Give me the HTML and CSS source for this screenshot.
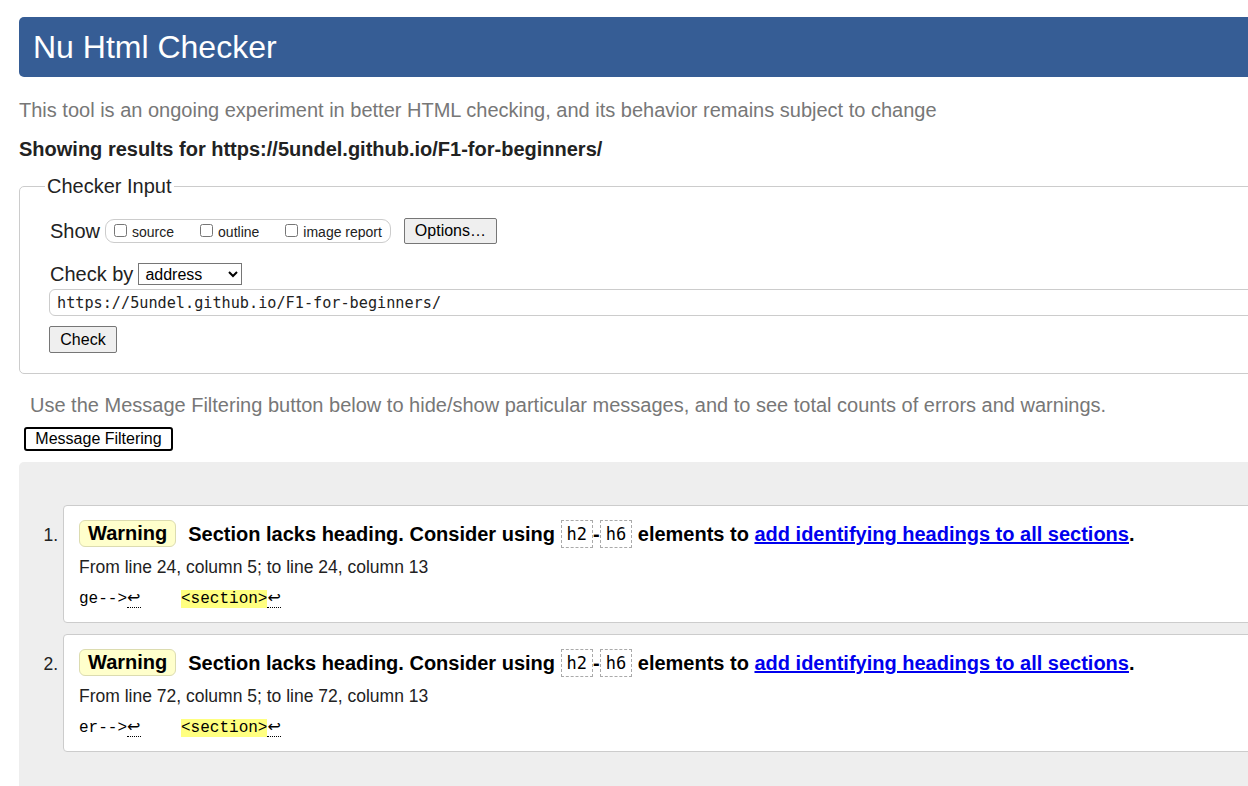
FILE: index.html
```html
<!DOCTYPE html>
<html lang="en">
<head>
<meta charset="utf-8">
<title>Nu Html Checker</title>
<link rel="stylesheet" href="styles.css">
</head>
<body>
<div class="page">
  <h1 class="title">Nu Html Checker</h1>
  <p class="intro">This tool is an ongoing experiment in better HTML checking, and its behavior remains subject to change</p>
  <p class="showing">Showing results for https://5undel.github.io/F1-for-beginners/</p>

  <fieldset class="input-box">
    <legend class="legend">Checker Input</legend>
    <div class="row show-row">
      <span class="row-label">Show</span>
      <span class="pill">
        <label class="opt"><input type="checkbox" class="cb">source</label>
        <label class="opt"><input type="checkbox" class="cb">outline</label>
        <label class="opt"><input type="checkbox" class="cb">image report</label>
      </span>
      <button class="btn options-btn" type="button">Options…</button>
    </div>
    <div class="row checkby-row">
      <span class="row-label">Check by</span>
      <select class="select"><option>address</option></select>
    </div>
    <div class="url-field">https://5undel.github.io/F1-for-beginners/</div>
    <button class="btn check-btn" type="button">Check</button>
  </fieldset>

  <p class="filter-note">Use the Message Filtering button below to hide/show particular messages, and to see total counts of errors and warnings.</p>
  <button class="filter-btn" type="button">Message Filtering</button>

  <div class="results">
    <ol class="msgs">
      <li class="msg">
        <p class="msg-line"><span class="badge">Warning</span><span class="msg-text">Section lacks heading. Consider using <code class="tag">h2</code>-<code class="tag">h6</code> elements to <a href="#" class="link">add identifying headings to all sections</a>.</span></p>
        <p class="loc">From line 24, column 5; to line 24, column 13</p>
        <p class="extract">ge--&gt;<span class="lf">↩</span><span class="gap"></span><mark class="hl">&lt;section&gt;</mark><span class="lf">↩</span></p>
      </li>
      <li class="msg">
        <p class="msg-line"><span class="badge">Warning</span><span class="msg-text">Section lacks heading. Consider using <code class="tag">h2</code>-<code class="tag">h6</code> elements to <a href="#" class="link">add identifying headings to all sections</a>.</span></p>
        <p class="loc">From line 72, column 5; to line 72, column 13</p>
        <p class="extract">er--&gt;<span class="lf">↩</span><span class="gap"></span><mark class="hl">&lt;section&gt;</mark><span class="lf">↩</span></p>
      </li>
    </ol>
  </div>
</div>
</body>
</html>
```

FILE: styles.css
```css
html, body {
  margin: 0;
  padding: 0;
  overflow: hidden;
  background: #fff;
}

body {
  font-family: "Liberation Sans", Arial, sans-serif;
  color: #222;
}

.page {
  width: 1400px;
  padding: 17px 0 0 19px;
}

.title {
  margin: 0;
  height: 60px;
  line-height: 60px;
  padding-left: 14px;
  font-size: 32px;
  font-weight: normal;
  color: #fff;
  background: #365d95;
  border-radius: 5px 0 0 5px;
}

.intro {
  margin: 22px 0 0;
  font-size: 20px;
  line-height: 23px;
  color: #777;
}

.showing {
  margin: 16px 0 0;
  font-size: 20px;
  line-height: 23px;
  font-weight: bold;
  color: #222;
}

.input-box {
  margin: 14px 0 0;
  padding: 0 0 20px 30px;
  border: 1px solid #ccc;
  border-radius: 5px 0 0 5px;
  min-width: 0;
}

.legend {
  font-size: 20px;
  line-height: 23px;
  padding: 0 2px;
  margin-left: -5px;
  color: #222;
}

.row {
  display: flex;
  align-items: center;
}

.row-label {
  font-size: 20px;
  color: #222;
}

.show-row {
  margin-top: 20px;
  height: 26px;
}

.pill {
  display: flex;
  align-items: center;
  height: 22px;
  margin-left: 5px;
  padding: 0 8px 0 8px;
  border: 1px solid #ccc;
  border-radius: 9px;
  gap: 26px;
}

.opt {
  display: flex;
  align-items: center;
  font-size: 14px;
  color: #222;
  padding-top: 2px;
}

.cb {
  width: 13px;
  height: 13px;
  margin: -4px 5px 0 0;
}

.btn {
  font-family: "Liberation Sans", Arial, sans-serif;
  font-size: 16px;
  color: #000;
  background: #efefef;
  border: 1px solid #767676;
  border-radius: 2px;
  padding: 0;
}

.options-btn {
  margin-left: 13px;
  width: 93px;
  height: 26px;
}

.checkby-row {
  margin-top: 18px;
  height: 24px;
}

.select {
  margin-left: 5px;
  width: 104px;
  height: 22px;
  font-family: "Liberation Sans", Arial, sans-serif;
  font-size: 16px;
  color: #000;
  border: 1px solid #767676;
  border-radius: 0;
  background: #fff;
  padding: 0 2px;
}

.url-field {
  margin: 3px 0 0 -1px;
  box-sizing: border-box;
  height: 27px;
  line-height: 23px;
  padding: 2px 0 0 7px;
  border: 1px solid #ccc;
  border-radius: 6px 0 0 6px;
  font-family: "DejaVu Sans Mono", "Liberation Mono", monospace;
  font-size: 15.2px;
  color: #222;
}

.check-btn {
  display: block;
  margin: 10px 0 0 -1px;
  width: 68px;
  height: 27px;
}

.filter-note {
  margin: 20px 0 0 11px;
  font-size: 20px;
  line-height: 23px;
  color: #777;
}

.filter-btn {
  display: block;
  margin: 10px 0 0 5px;
  width: 149px;
  height: 24px;
  padding: 0;
  font-family: "Liberation Sans", Arial, sans-serif;
  font-size: 16px;
  color: #000;
  background: #fff;
  border: 2px solid #000;
  border-radius: 3px;
}

.results {
  margin-top: 11px;
  background: #eee;
  border-radius: 5px 0 0 0;
  padding: 43px 0 60px;
}

.msgs {
  margin: 0;
  padding: 0 0 0 44px;
  font-size: 17.5px;
  color: #222;
}

.msg {
  background: #fff;
  border: 1px solid #ccc;
  border-radius: 4px 0 0 4px;
  padding: 14px 15px 12px;
  margin-bottom: 11px;
}

.msg-line {
  margin: 0;
  line-height: 28px;
  font-size: 20px;
  font-weight: bold;
  color: #000;
}

.badge {
  display: inline-block;
  box-sizing: border-box;
  height: 27px;
  line-height: 25px;
  padding: 0 8px;
  background: #ffffcc;
  border: 1px solid #dcdcb0;
  border-radius: 6px;
  color: #000;
  vertical-align: top;
}

.msg-text {
  margin-left: 12px;
}

.tag {
  display: inline-block;
  box-sizing: border-box;
  height: 28px;
  line-height: 26px;
  padding: 0 5px;
  border: 1px dashed #aaa;
  font-family: "DejaVu Sans Mono", "Liberation Mono", monospace;
  font-weight: normal;
  font-size: 17px;
  color: #000;
  vertical-align: top;
}

.link {
  color: #0000ee;
  text-decoration: underline;
}

.loc {
  margin: 9px 0 0;
  font-size: 17.5px;
  line-height: 20px;
  color: #222;
}

.extract {
  margin: 11px 0 0;
  font-family: "Liberation Mono", "DejaVu Sans Mono", monospace;
  font-size: 16px;
  line-height: 22px;
  color: #000;
  white-space: pre;
}

.lf {
  display: inline-block;
  width: 14px;
  line-height: 18px;
  font-family: "DejaVu Sans", sans-serif;
  font-size: 16px;
  border-bottom: 1px dotted #000;
  text-align: left;
}

.gap {
  display: inline-block;
  width: 40px;
}

.hl {
  background: #ffff80;
  color: #000;
}
```
